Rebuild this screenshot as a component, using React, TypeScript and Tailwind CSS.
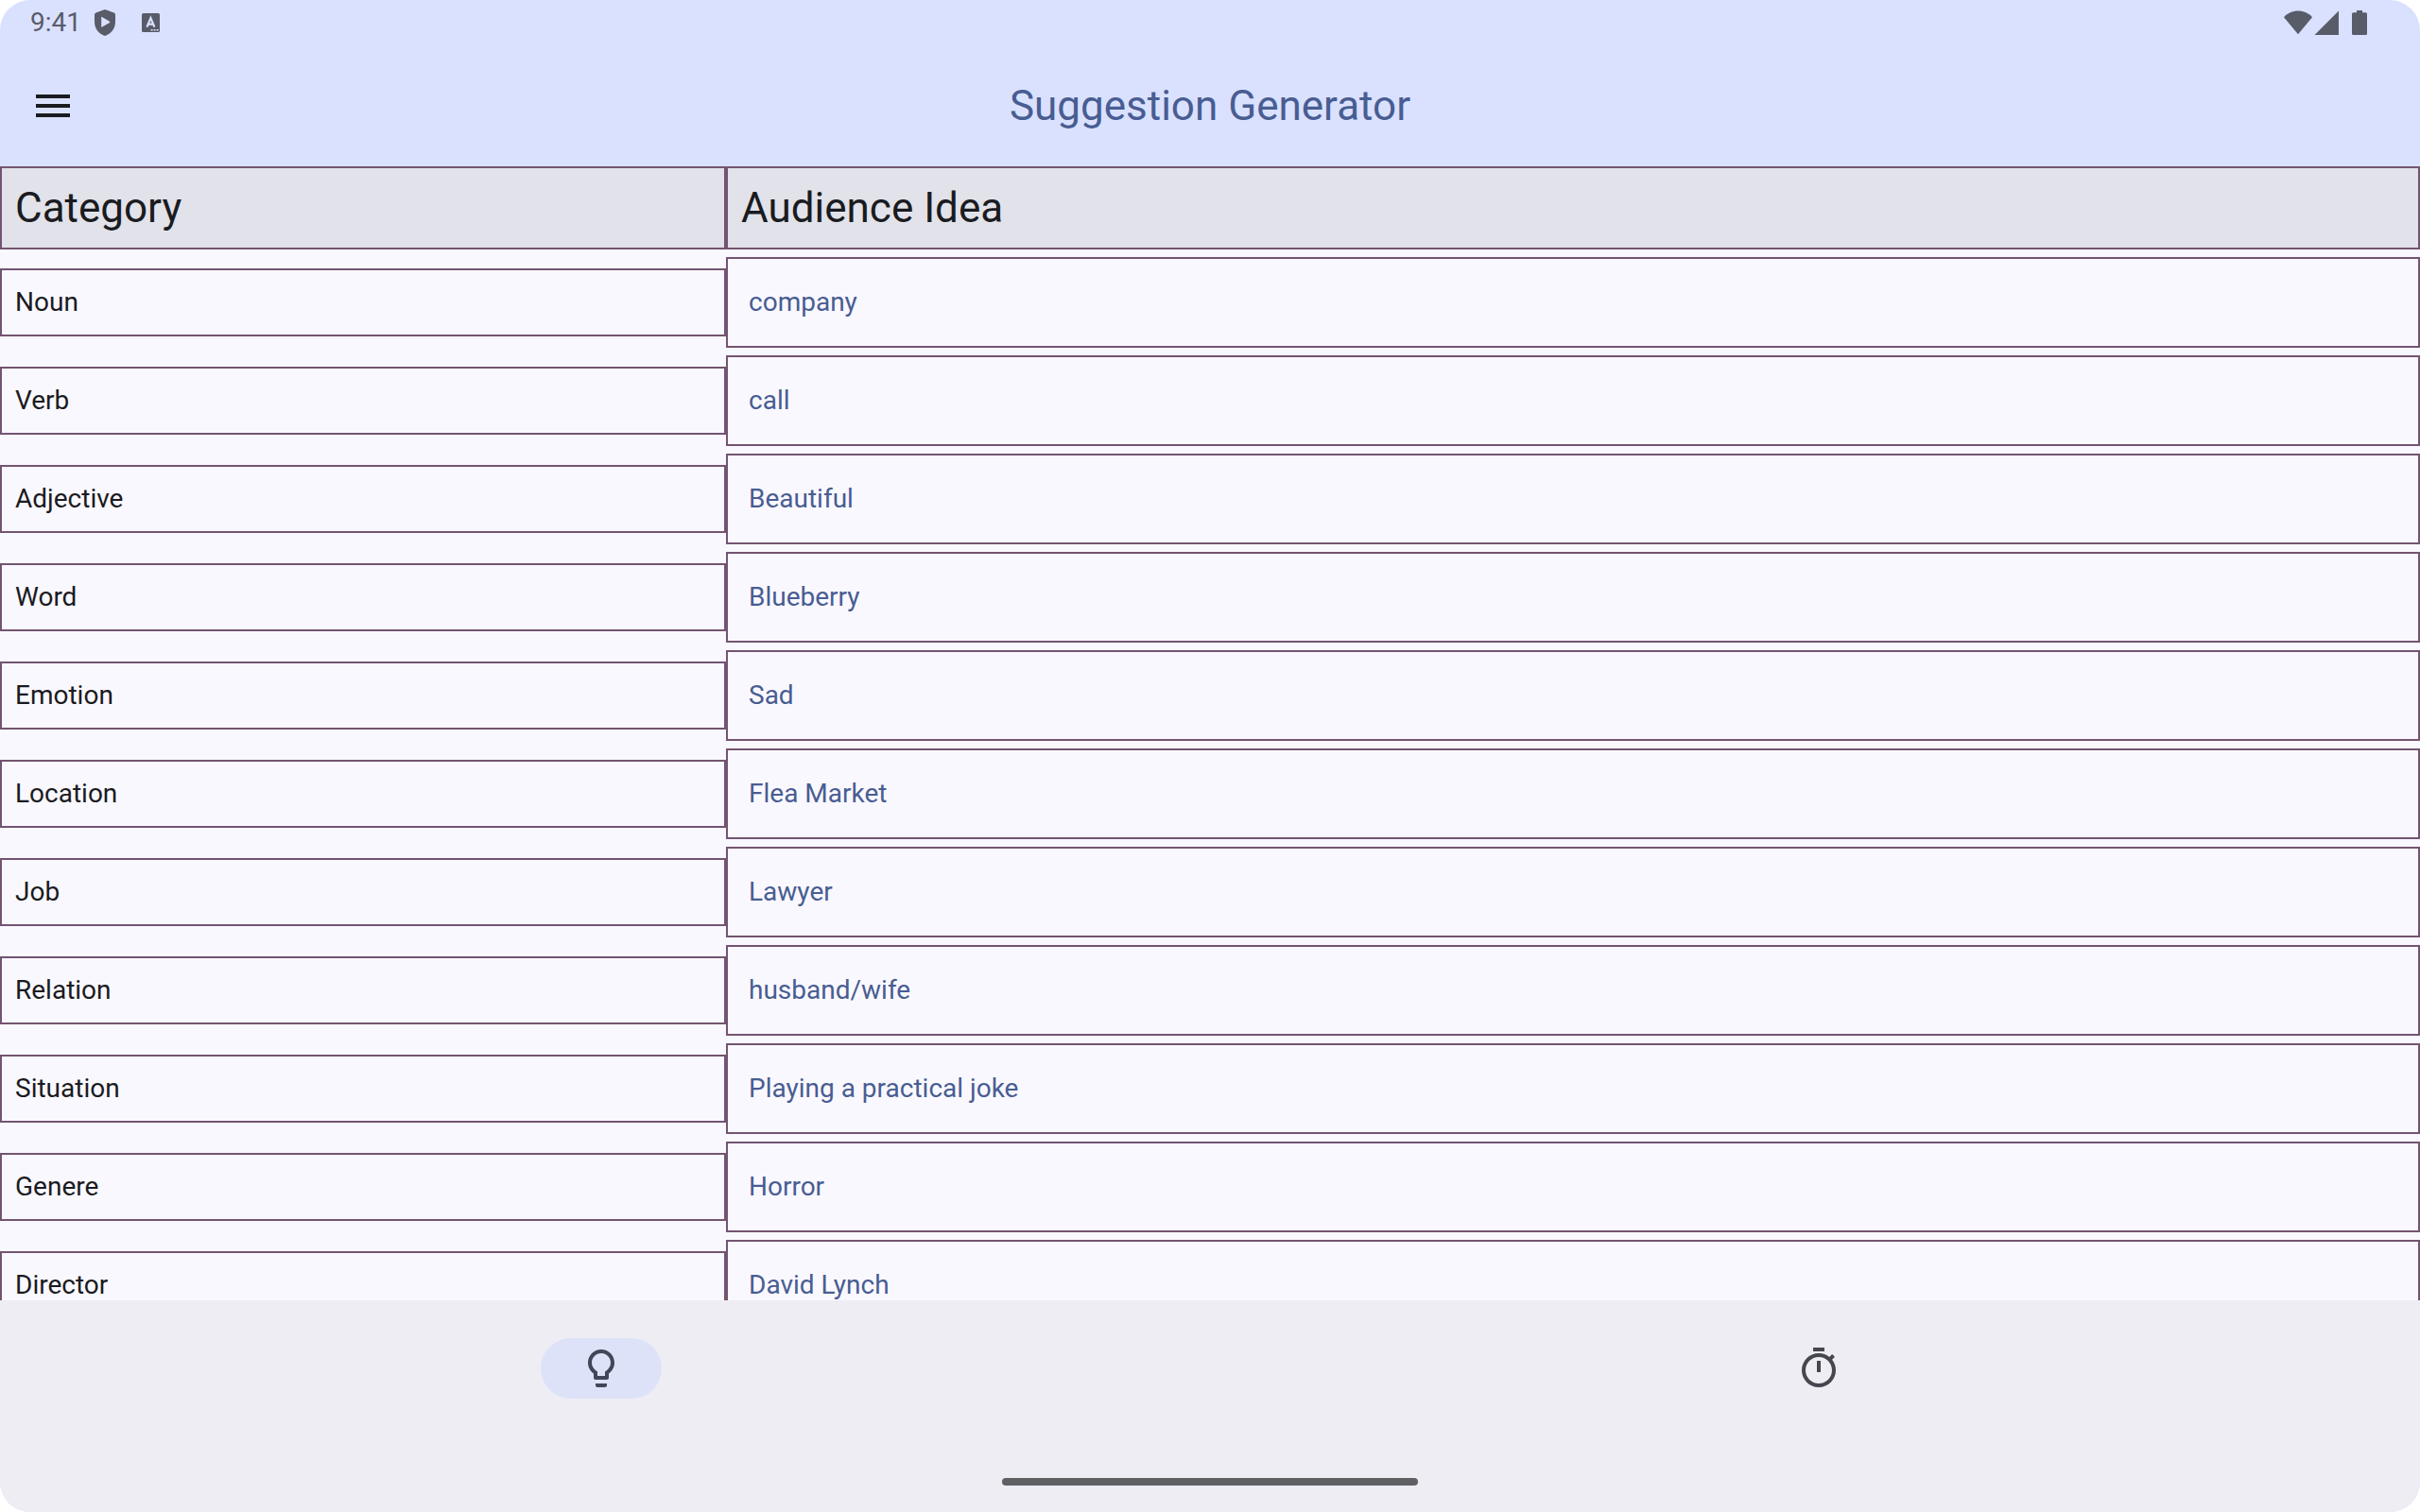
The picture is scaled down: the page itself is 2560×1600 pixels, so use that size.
const ideas: { category: string; idea: string }[] = [
  { category: 'Noun', idea: 'company' },
  { category: 'Verb', idea: 'call' },
  { category: 'Adjective', idea: 'Beautiful' },
  { category: 'Word', idea: 'Blueberry' },
  { category: 'Emotion', idea: 'Sad' },
  { category: 'Location', idea: 'Flea Market' },
  { category: 'Job', idea: 'Lawyer' },
  { category: 'Relation', idea: 'husband/wife' },
  { category: 'Situation', idea: 'Playing a practical joke' },
  { category: 'Genere', idea: 'Horror' },
  { category: 'Director', idea: 'David Lynch' },
];

function StatusBar() {
  return (
    <div className="flex h-12 shrink-0 items-center justify-between pl-8 pr-14 text-[#585b68]">
      <div className="flex items-center">
        <span className="text-[28px] leading-8">9:41</span>
        <svg className="ml-3.5 h-7 w-[22px]" viewBox="0 0 22 28" fill="currentColor" aria-hidden="true">
          <path
            fillRule="evenodd"
            d="M11 0 L20.6 3.4 Q22 3.9 22 5.4 V13 C22 20.5 17.5 25.5 11 28 C4.5 25.5 0 20.5 0 13 V5.4 Q0 3.9 1.4 3.4 Z M7.2 8.4 V18.2 Q7.2 19 8 18.5 L16 14 Q16.8 13.4 16 12.8 L8 8 Q7.2 7.6 7.2 8.4 Z"
          />
        </svg>
        <svg className="ml-7 h-5 w-[19px]" viewBox="0 0 19 20" fill="currentColor" aria-hidden="true">
          <rect width="19" height="20" rx="1.5" />
          <path d="M5.4 14.6 L9.4 5 L13.4 14.6 M6.8 11.6 H12" fill="none" stroke="#dae1ff" strokeWidth="2.2" />
          <path d="M9.6 17 h2 v1.6 h-2z M12.6 17 h2 v1.6 h-2z M15.6 17 h2 v1.6 h-2z" fill="#dae1ff" />
        </svg>
      </div>
      <div className="flex items-center">
        <svg className="h-[26px] w-[30px]" viewBox="0 0 30 26" fill="currentColor" aria-hidden="true">
          <path d="M15 25.2 L0 7.2 C4 3 9 0.6 15 0.6 S26 3 30 7.2 Z" />
        </svg>
        <svg className="ml-0.5 h-[26px] w-[26px]" viewBox="0 0 26 26" fill="currentColor" aria-hidden="true">
          <path d="M26 0.5 V26 H0.5 Z" />
        </svg>
        <svg className="ml-3.5 h-[26px] w-4" viewBox="0 0 16 26" fill="currentColor" aria-hidden="true">
          <path d="M5 0 H11 V2.3 H14.5 Q16 2.3 16 3.8 V24.5 Q16 26 14.5 26 H1.5 Q0 26 0 24.5 V3.8 Q0 2.3 1.5 2.3 H5 Z" />
        </svg>
      </div>
    </div>
  );
}

function AppBar() {
  return (
    <header className="grid h-32 shrink-0 grid-cols-[1fr_auto_1fr] items-center px-8">
      <button type="button" aria-label="Open menu" className="size-12 text-[#1a1b21]">
        <svg className="size-12" viewBox="0 0 24 24" fill="currentColor" aria-hidden="true">
          <path d="M3 18h18v-2H3v2zm0-5h18v-2H3v2zm0-7v2h18V6H3z" />
        </svg>
      </button>
      <h1 className="text-[44px] leading-[56px] text-[#485d92]">Suggestion Generator</h1>
    </header>
  );
}

function IdeaTable() {
  return (
    <table className="w-full table-fixed border-separate border-spacing-0">
      <thead>
        <tr className="bg-[#e2e2ea] text-left text-[44px] leading-[56px]">
          <th scope="col" className="h-22 w-[30%] border-2 border-[#735471] px-3.5 py-0 font-normal">
            Category
          </th>
          <th scope="col" className="h-22 border-2 border-[#735471] px-3.5 py-0 font-normal">
            Audience Idea
          </th>
        </tr>
      </thead>
      <tbody className="text-[28px] leading-10">
        {ideas.map(({ category, idea }) => (
          <tr key={category}>
            <th scope="row" className="p-0 pt-2 text-left align-middle font-normal">
              <div className="border-2 border-[#735471] px-3.5 py-3.5">{category}</div>
            </th>
            <td className="p-0 pt-2">
              <div className="flex h-24 items-center border-2 border-[#735471] px-[22px]">
                <button type="button" className="text-[#485d92]">
                  {idea}
                </button>
              </div>
            </td>
          </tr>
        ))}
      </tbody>
    </table>
  );
}

function BottomNav() {
  return (
    <footer className="flex h-56 shrink-0 flex-col items-center justify-between bg-[#eeedf4] pb-7 pt-10">
      <nav className="flex w-full gap-4">
        <div className="flex flex-1 justify-center">
          <button
            type="button"
            aria-label="Suggestions"
            aria-current="page"
            className="flex h-16 w-32 items-center justify-center rounded-full bg-[#dde2f9] text-[#414659]"
          >
            <svg className="size-12" viewBox="0 0 24 24" fill="currentColor" aria-hidden="true">
              <path d="M9 21c0 .55.45 1 1 1h4c.55 0 1-.45 1-1v-1H9v1zm3-19C8.14 2 5 5.14 5 9c0 2.38 1.19 4.47 3 5.74V17c0 .55.45 1 1 1h6c.55 0 1-.45 1-1v-2.26c1.81-1.27 3-3.36 3-5.74 0-3.86-3.14-7-7-7zm2.85 11.1l-.85.6V16h-4v-2.3l-.85-.6C7.8 12.16 7 10.63 7 9c0-2.76 2.24-5 5-5s5 2.24 5 5c0 1.63-.8 3.16-2.15 4.1z" />
            </svg>
          </button>
        </div>
        <div className="flex flex-1 justify-center">
          <button
            type="button"
            aria-label="Timer"
            className="flex h-16 w-32 items-center justify-center rounded-full text-[#45464f]"
          >
            <svg className="size-12" viewBox="0 0 24 24" fill="currentColor" aria-hidden="true">
              <path d="M15 1H9v2h6V1zm-4 13h2V8h-2v6zm8.03-6.61l1.42-1.42c-.43-.51-.9-.99-1.41-1.41l-1.42 1.42C16.07 4.74 14.12 4 12 4c-4.97 0-9 4.03-9 9s4.02 9 9 9 9-4.03 9-9c0-2.12-.74-4.07-1.97-5.61zM12 20c-3.87 0-7-3.13-7-7s3.13-7 7-7 7 3.13 7 7-3.13 7-7 7z" />
            </svg>
          </button>
        </div>
      </nav>
      <div className="h-2 w-[440px] rounded-full bg-[#5f6062]" />
    </footer>
  );
}

export default function App() {
  return (
    <div className="h-screen bg-white">
      <div className="flex h-full flex-col overflow-hidden rounded-[32px] bg-[#dae1ff] font-[Roboto,sans-serif] text-[#1a1b21]">
        <StatusBar />
        <AppBar />
        <main className="min-h-0 flex-1 overflow-hidden bg-[#faf8ff]">
          <IdeaTable />
        </main>
        <BottomNav />
      </div>
    </div>
  );
}
